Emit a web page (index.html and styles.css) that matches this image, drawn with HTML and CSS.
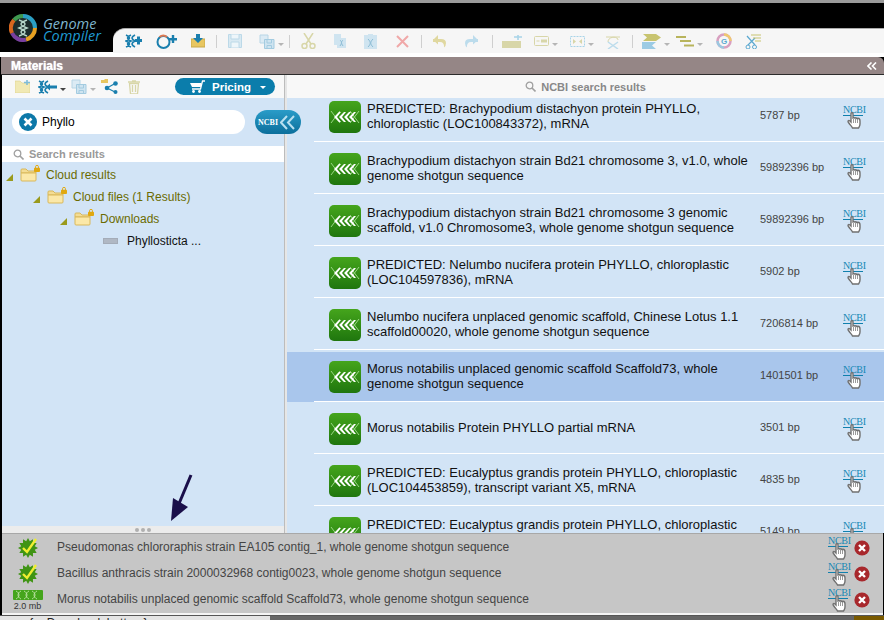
FILE: index.html
```html
<!DOCTYPE html>
<html lang="en">
<head>
	<meta charset="UTF-8">
	<title>Genome Compiler</title>
	<link rel="stylesheet" href="styles.css">
</head>
<body>
	<!-- shared icons -->
	<svg class="defs" width="0" height="0">
		<symbol id="seq" viewBox="0 0 32 32">
			<rect width="32" height="32" rx="5" fill="url(#seqGrad)"/>
			<path d="M2 10 L11 22 M11 10 L2 22 M21 10 L30 22 M30 10 L21 22" stroke="#9ad685" stroke-width="1" fill="none"/>
			<path d="M10 11 L5 16 L10 21 L12 21 L8 16 L12 11Z M15 11 L10 16 L15 21 L17 21 L13 16 L17 11Z M20 11 L15 16 L20 21 L22 21 L18 16 L22 11Z M25 11 L20 16 L25 21 L27 21 L23 16 L27 11Z" fill="#fff"/>
		</symbol>
		<linearGradient id="seqGrad" x1="0" y1="0" x2="0" y2="1">
			<stop offset="0" stop-color="#45a51c"/>
			<stop offset="1" stop-color="#1f760e"/>
		</linearGradient>
		<symbol id="hand" viewBox="0 0 14 17">
			<path d="M4 1.5 C4 .5 6 .5 6 1.5 L6 6 L7 5.6 L7.6 6 L9 5.8 L9.6 6.4 L11 6.2 C12.5 6.4 13 7.5 13 9 L13 12 C13 14 12 15 11.5 16 L5.5 16 C5 14.5 3.5 13.5 1.5 10.5 C.5 9 1.5 8 3 9 L4 10Z" fill="#fff" stroke="#707070" stroke-width="1.4"/>
			<path d="M6.5 7 V11 M8.5 7 V11 M10.5 7 V11" stroke="#808080" stroke-width=".8"/>
		</symbol>
		<symbol id="burst" viewBox="0 0 20 20">
			<polygon points="20,10 16.76,11.81 18.66,15 14.95,14.95 15,18.66 11.81,16.76 10,20 8.19,16.76 5,18.66 5.05,14.95 1.34,15 3.24,11.81 0,10 3.24,8.19 1.34,5 5.05,5.05 5,1.34 8.19,3.24 10,0 11.81,3.24 15,1.34 14.95,5.05 18.66,5 16.76,8.19" fill="#3f9414"/>
			<path d="M5 10 L9 14 L18 1" fill="none" stroke="#f0ee30" stroke-width="2.4"/>
		</symbol>
		<symbol id="close" viewBox="0 0 16 16">
			<circle cx="8" cy="8" r="7.6" fill="#a8282c"/>
			<path d="M5 5 L11 11 M11 5 L5 11" stroke="#fff" stroke-width="2.4"/>
		</symbol>
		<symbol id="folder" viewBox="0 0 17 14">
			<path d="M1 4 V2 Q1 1 2 1 H6 L8 3 H15 Q16 3 16 4 V5 H1Z" fill="#f3dc94" stroke="#d9b85a"/>
			<path d="M1 5 H16 V12 Q16 13 15 13 H2 Q1 13 1 12Z" fill="#fbe8a8" stroke="#d9b85a"/>
		</symbol>
		<symbol id="lock" viewBox="0 0 7 8">
			<rect x="0" y="3" width="7" height="5" rx="1" fill="#e0a810"/>
			<path d="M1.8 3.5 V2 A1.7 1.7 0 0 1 5.2 2 V3.5" fill="none" stroke="#e0a810" stroke-width="1.1"/>
		</symbol>
		<symbol id="strand" viewBox="0 0 11 14">
			<path d="M1 1 C5.500 3 5.500 5 1 7 C5.500 9 5.500 11 1 13 M6 1 C1.500 3 1.500 5 6 7 C1.500 9 1.500 11 6 13 M10 1 C6 3 6 5 10 7 C6 9 6 11 10 13" fill="none" stroke="currentColor" stroke-width="1.700"/>
		</symbol>
		<symbol id="copydoc" viewBox="0 0 16 15">
			<path d="M1 1 H9 V9 H1Z" fill="#dcebf4" stroke="#b8d6e6"/>
			<path d="M5.5 5.5 H15 V14.5 H5.5Z" fill="#cfe4f0" stroke="#a3cbe0"/>
			<path d="M8 5.5 V9 H12.5 V5.5 M8 14.5 V11.5 H12.5 V14.5" fill="none" stroke="#a3cbe0"/>
		</symbol>
	</svg>

	<div class="app">
		<div class="topline"></div>

		<div class="header">
			<div class="logo">
				<svg width="28" height="28" viewBox="0 0 28 28">
					<circle cx="14" cy="14" r="14" fill="#1c2c2c"/>
					<path d="M14 2 A12 12 0 0 1 26 14" fill="none" stroke="#2a9fc4" stroke-width="4"/>
					<path d="M26 14 A12 12 0 0 1 17 25.6" fill="none" stroke="#e8a020" stroke-width="4"/>
					<path d="M17 25.6 A12 12 0 0 1 3 19" fill="none" stroke="#7a3fa0" stroke-width="4"/>
					<path d="M3 19 A12 12 0 0 1 5 6" fill="none" stroke="#d8661e" stroke-width="4"/>
					<path d="M5 6 A12 12 0 0 1 14 2" fill="none" stroke="#3f9a50" stroke-width="4"/>
					<path d="M10 6 C18 9 18 11 10 14 C18 17 18 19 10 22 M18 6 C10 9 10 11 18 14 C10 17 10 19 18 22" fill="none" stroke="#b9d8cc" stroke-width="1.400"/>
				</svg>
				<div class="logo-name">
					<div class="logo-top">Genome</div>
					<div class="logo-bottom">Compiler</div>
				</div>
			</div>

			<div class="toolbar">
				<div class="tool-group first">
					<svg class="on" width="17" height="14" viewBox="0 0 17 14"><use href="#strand" width="11" height="14"/><path d="M10 5 H17 V8 H10Z M12 2.500 H15 V10.500 H12Z" fill="#1a7fae"/></svg>
					<svg width="21" height="15" viewBox="0 0 21 15"><circle cx="7.500" cy="8" r="6" fill="none" stroke="#1a7fae" stroke-width="2"/><path d="M3.500 3 A6 6 0 0 1 11 3" fill="none" stroke="#e07850" stroke-width="2"/><path d="M13 4 H21 V6.500 H13Z M15.800 1 H18.200 V9 H15.800Z" fill="#1a7fae"/></svg>
					<svg width="14" height="14" viewBox="0 0 14 14"><path d="M0 5 H14 V13 H0Z" fill="#e8c660" stroke="#c8a848"/><path d="M5 0 H9 V4 H12 L7 9 L2 4 H5Z" fill="#1a7fae"/></svg>
				</div>
				<div class="sep"></div>
				<div class="tool-group second">
					<svg width="14" height="14" viewBox="0 0 14 14"><path d="M.5 .5 H13.500 V13.500 H.5Z" fill="#d8e9f2" stroke="#bcd9e8"/><path d="M3 .5 V5 H11 V.5 M3 13.500 V8 H11 V13.500" fill="#eef6fa" stroke="#bcd9e8"/></svg>
					<span class="has-caret"><svg width="16" height="15"><use href="#copydoc"/></svg><i class="caret"></i></span>
				</div>
				<div class="sep"></div>
				<div class="tool-group edit">
					<svg width="15" height="16" viewBox="0 0 15 16"><path d="M3 0 L10 11 M12 0 L5 11" stroke="#d8d6a8" stroke-width="1.500"/><circle cx="3.500" cy="13" r="2.500" fill="none" stroke="#d8d6a8" stroke-width="1.500"/><circle cx="11.500" cy="13" r="2.500" fill="none" stroke="#d8d6a8" stroke-width="1.500"/></svg>
					<svg width="12" height="14" viewBox="0 0 12 14"><path d="M0 0 H7 L7 4 H12 V14 H3 V11 H0Z" fill="#cfe4f0"/><path d="M6 6 C8 8 8 9 6 12 M9 6 C7 8 7 9 9 12" stroke="#8dbdd6" fill="none"/></svg>
					<svg width="14" height="15" viewBox="0 0 14 15"><path d="M0 1 H4 V0 H9 V1 H13 V15 H0Z" fill="#cfe4f0"/><path d="M4 5 C7 8 7 10 4 13 M9 5 C6 8 6 10 9 13" stroke="#8dbdd6" fill="none"/></svg>
					<svg width="13" height="13" viewBox="0 0 13 13"><path d="M1 1 L12 12 M12 1 L1 12" stroke="#f0a8a8" stroke-width="2"/></svg>
				</div>
				<div class="sep"></div>
				<div class="tool-group history">
					<svg width="15" height="14" viewBox="0 0 15 14"><path d="M1 5 H9 Q14 5 14 9 Q14 12 12 13.500 Q12.500 8 8 8 H1Z" fill="#e0d8a0"/><path d="M6 1 L1 6 L6 10.500Z" fill="#e0d8a0"/></svg>
					<svg width="15" height="14" viewBox="0 0 15 14"><path d="M14 5 H6 Q1 5 1 9 Q1 12 3 13.500 Q2.500 8 7 8 H14Z" fill="#bcdcec"/><path d="M9 1 L14 6 L9 10.500Z" fill="#bcdcec"/></svg>
				</div>
				<div class="sep"></div>
				<div class="tool-group features">
					<svg width="20" height="13" viewBox="0 0 20 13"><rect y="6" width="19" height="7" fill="#d8d6a8"/><path d="M12 2 H20 M16 0 V5" stroke="#a8d4e8" stroke-width="1.600"/></svg>
					<span class="has-caret"><svg width="15" height="10" viewBox="0 0 15 10"><rect x=".5" y=".5" width="14" height="9" rx="1" fill="none" stroke="#d8d6a8"/><rect x="7" y="3.500" width="6" height="3" fill="#d8d6a8"/><rect x="2.500" y="4.500" width="3" height="1" fill="#d8d6a8"/></svg><i class="caret"></i></span>
					<span class="has-caret"><svg width="15" height="11" viewBox="0 0 15 11"><rect x=".5" y=".5" width="14" height="10" fill="none" stroke="#a8d4e8" stroke-dasharray="2 1"/><path d="M3 3 L6 5.500 L3 8Z M12 3 L9 5.500 L12 8Z" fill="#d8d6a8"/></svg><i class="caret"></i></span>
					<svg width="14" height="15" viewBox="0 0 14 15"><path d="M2 8 C2 2 12 2 12 6 M0 3 L14 3" stroke="#d8d6a8" fill="none"/><path d="M2 8 L12 15 M12 8 L2 15" stroke="#bcdcec" stroke-width="1.500"/></svg>
				</div>
				<div class="sep"></div>
				<div class="tool-group last">
					<span class="has-caret"><svg width="19" height="15" viewBox="0 0 19 15"><path d="M1 0 H14 L19 3.500 L14 7 H1 L5 3.500Z" fill="#c8c470"/><path d="M0 8 H14 L10 11.500 L14 15 H0Z" fill="#9ccbe4"/></svg><i class="caret"></i></span>
					<span class="has-caret"><svg width="18" height="11" viewBox="0 0 18 11"><path d="M0 1 H10 M4 5 H15 M8 9.500 H18" stroke="#b8b45c" stroke-width="2"/></svg><i class="caret"></i></span>
					<svg width="16" height="16" viewBox="0 0 16 16"><circle cx="8" cy="8" r="6.500" fill="none" stroke="#d8a0c0" stroke-width="2.500"/><path d="M8 1.500 A6.500 6.500 0 0 1 14.500 8" fill="none" stroke="#f0c870" stroke-width="2.500"/><path d="M1.500 8 A6.500 6.500 0 0 0 8 14.500" fill="none" stroke="#9cc8e0" stroke-width="2.500"/><text x="8" y="11" class="g-mark">G</text></svg>
					<svg width="16" height="15" viewBox="0 0 16 15"><path d="M2 2 L10 11 M10 4 L3 11" stroke="#5aa8d0" stroke-width="1.200"/><circle cx="3" cy="13" r="2" fill="none" stroke="#5aa8d0"/><circle cx="9.500" cy="13" r="2" fill="none" stroke="#5aa8d0"/><path d="M6 1 H16 M8 4 H16 M10 7 H16" stroke="#c8c470"/></svg>
				</div>
			</div>
		</div>

		<div class="titlebar">
			<span class="title">Materials</span>
			<svg width="10" height="8" viewBox="0 0 10 8"><path d="M4.500 .5 L1 4 L4.500 7.500 M9 .5 L5.500 4 L9 7.500" fill="none" stroke="#fff" stroke-width="1.600"/></svg>
		</div>

		<div class="main">
			<!-- left side, cloud files -->
			<div class="left">
				<div class="left-tools">
					<div class="left-icons">
						<svg class="new-folder" width="15" height="13" viewBox="0 0 15 13"><path d="M0 1 H5 L7 3 H15 V13 H0Z" fill="#f1e9b4" stroke="#dcd08c" stroke-width=".6"/><path d="M9 2.500 H15 M12 0 V5" stroke="#7fbcd8" stroke-width="1.600"/></svg>
						<span class="has-caret"><svg class="on" width="19" height="14" viewBox="0 0 19 14"><use href="#strand" width="11" height="14"/><path d="M8 7 L12 3.500 V5.500 H19 V8.500 H12 V10.500Z" fill="#1a7fae"/></svg><i class="caret dark"></i></span>
						<span class="has-caret"><svg width="16" height="15"><use href="#copydoc"/></svg><i class="caret"></i></span>
						<svg width="18" height="15" viewBox="0 0 18 15"><path d="M0 1 H3 L4 0 H7 V4 H0Z" fill="#e8c660"/><path d="M6 9 L14 4.500 M6 9 L14 13" stroke="#1a7fae" stroke-width="1.200"/><circle cx="6" cy="9" r="2.300" fill="#1a7fae"/><circle cx="14.500" cy="4.500" r="2.300" fill="#1a7fae"/><circle cx="14.500" cy="13" r="2" fill="#1a7fae"/></svg>
						<svg class="trash" width="12" height="14" viewBox="0 0 12 14"><path d="M0 2 H12 M4 1 H8" stroke="#d8d6a8" stroke-width="1.600"/><path d="M1.500 3.500 L2.500 14 H9.500 L10.500 3.500Z M4.500 5 V12 M7.500 5 V12" fill="none" stroke="#d8d6a8" stroke-width="1.300"/></svg>
					</div>
					<div class="pricing">
						<svg width="15" height="13" viewBox="0 0 15 13"><path d="M15 1 H12.500 L10.500 9 H2" fill="none" stroke="#fff" stroke-width="1.300"/><path d="M0 3 H11.500 L10.800 7 H2Z" fill="#fff"/><circle cx="3.500" cy="11.500" r="1.400" fill="#fff"/><circle cx="9.500" cy="11.500" r="1.400" fill="#fff"/></svg>
						<span>Pricing</span>
						<i class="caret white"></i>
					</div>
				</div>

				<div class="search-row">
					<div class="search-box">
						<svg width="18" height="18" viewBox="0 0 18 18"><circle cx="9" cy="9" r="9" fill="#0d78a8"/><path d="M5.500 5.500 L12.500 12.500 M12.500 5.500 L5.500 12.500" stroke="#fff" stroke-width="2.600"/></svg>
						<span class="search-text">Phyllo</span>
					</div>
					<div class="ncbi-btn">
						<span>NCBI</span>
						<svg width="15" height="15" viewBox="0 0 15 15"><path d="M7 1 L1 7.500 L7 14 M14 1 L8 7.500 L14 14" fill="none" stroke="#b8e0f0" stroke-width="2"/></svg>
					</div>
				</div>

				<div class="small-search">
					<svg width="11" height="11" viewBox="0 0 11 11"><circle cx="4.500" cy="4.500" r="3.300" fill="none" stroke="#a0a0a0" stroke-width="1.300"/><path d="M7 7 L10.500 10.500" stroke="#a0a0a0" stroke-width="1.600"/></svg>
					<span>Search results</span>
				</div>

				<div class="tree">
					<div class="tree-row"><i class="open"></i><span class="tree-folder"><svg width="17" height="14"><use href="#folder"/></svg><svg class="lock" width="6" height="7"><use href="#lock"/></svg></span><span>Cloud results</span></div>
					<div class="tree-row lvl1"><i class="open"></i><span class="tree-folder"><svg width="17" height="14"><use href="#folder"/></svg><svg class="lock" width="6" height="7"><use href="#lock"/></svg></span><span>Cloud files (1 Results)</span></div>
					<div class="tree-row lvl2"><i class="open"></i><span class="tree-folder"><svg width="17" height="14"><use href="#folder"/></svg><svg class="lock" width="6" height="7"><use href="#lock"/></svg></span><span>Downloads</span></div>
					<div class="tree-row leaf"><b class="file-mark"></b><span>Phyllosticta ...</span></div>
				</div>

				<div class="grip"><i></i><i></i><i></i></div>

				<!-- the arrow someone drew on the screenshot -->
				<svg class="arrow" width="24" height="48" viewBox="0 0 24 48"><path d="M21 1 L8 32" stroke="#1a0f4a" stroke-width="3"/><path d="M1 47 L3 24 L18 33Z" fill="#1a0f4a"/></svg>
			</div>

			<!-- right side, search results -->
			<div class="right">
				<div class="right-head">
					<svg width="11" height="11" viewBox="0 0 11 11"><circle cx="4.500" cy="4.500" r="3.300" fill="none" stroke="#a0a0a0" stroke-width="1.300"/><path d="M7 7 L10.500 10.500" stroke="#a0a0a0" stroke-width="1.600"/></svg>
					<span>NCBI search results</span>
				</div>
				<div class="list">
					<div class="list-inner">
						<div class="row">
							<div class="row-body"><svg class="seq" width="32" height="32"><use href="#seq"/></svg><div class="row-name">PREDICTED: Brachypodium distachyon protein PHYLLO, chloroplastic (LOC100843372), mRNA</div><div class="row-bp">5787 bp</div><div class="ncbi"><a>NCBI</a><svg width="14" height="17"><use href="#hand"/></svg></div></div>
							<div class="row-line"></div>
						</div>
						<div class="row">
							<div class="row-body"><svg class="seq" width="32" height="32"><use href="#seq"/></svg><div class="row-name">Brachypodium distachyon strain Bd21 chromosome 3, v1.0, whole genome shotgun sequence</div><div class="row-bp">59892396 bp</div><div class="ncbi"><a>NCBI</a><svg width="14" height="17"><use href="#hand"/></svg></div></div>
							<div class="row-line"></div>
						</div>
						<div class="row">
							<div class="row-body"><svg class="seq" width="32" height="32"><use href="#seq"/></svg><div class="row-name">Brachypodium distachyon strain Bd21 chromosome 3 genomic scaffold, v1.0 Chromosome3, whole genome shotgun sequence</div><div class="row-bp">59892396 bp</div><div class="ncbi"><a>NCBI</a><svg width="14" height="17"><use href="#hand"/></svg></div></div>
							<div class="row-line"></div>
						</div>
						<div class="row">
							<div class="row-body"><svg class="seq" width="32" height="32"><use href="#seq"/></svg><div class="row-name">PREDICTED: Nelumbo nucifera protein PHYLLO, chloroplastic (LOC104597836), mRNA</div><div class="row-bp">5902 bp</div><div class="ncbi"><a>NCBI</a><svg width="14" height="17"><use href="#hand"/></svg></div></div>
							<div class="row-line"></div>
						</div>
						<div class="row">
							<div class="row-body"><svg class="seq" width="32" height="32"><use href="#seq"/></svg><div class="row-name">Nelumbo nucifera unplaced genomic scaffold, Chinese Lotus 1.1 scaffold00020, whole genome shotgun sequence</div><div class="row-bp">7206814 bp</div><div class="ncbi"><a>NCBI</a><svg width="14" height="17"><use href="#hand"/></svg></div></div>
							<div class="row-line"></div>
						</div>
						<div class="row selected">
							<div class="row-body"><svg class="seq" width="32" height="32"><use href="#seq"/></svg><div class="row-name">Morus notabilis unplaced genomic scaffold Scaffold73, whole genome shotgun sequence</div><div class="row-bp">1401501 bp</div><div class="ncbi"><a>NCBI</a><svg width="14" height="17"><use href="#hand"/></svg></div></div>
							<div class="row-line"></div>
						</div>
						<div class="row">
							<div class="row-body"><svg class="seq" width="32" height="32"><use href="#seq"/></svg><div class="row-name">Morus notabilis Protein PHYLLO partial mRNA</div><div class="row-bp">3501 bp</div><div class="ncbi"><a>NCBI</a><svg width="14" height="17"><use href="#hand"/></svg></div></div>
							<div class="row-line"></div>
						</div>
						<div class="row">
							<div class="row-body"><svg class="seq" width="32" height="32"><use href="#seq"/></svg><div class="row-name">PREDICTED: Eucalyptus grandis protein PHYLLO, chloroplastic (LOC104453859), transcript variant X5, mRNA</div><div class="row-bp">4835 bp</div><div class="ncbi"><a>NCBI</a><svg width="14" height="17"><use href="#hand"/></svg></div></div>
							<div class="row-line"></div>
						</div>
						<div class="row">
							<div class="row-body"><svg class="seq" width="32" height="32"><use href="#seq"/></svg><div class="row-name">PREDICTED: Eucalyptus grandis protein PHYLLO, chloroplastic (LOC104453860), mRNA</div><div class="row-bp">5149 bp</div><div class="ncbi"><a>NCBI</a><svg width="14" height="17"><use href="#hand"/></svg></div></div>
							<div class="row-line"></div>
						</div>
					</div>
				</div>
			</div>
		</div>

		<!-- download tray -->
		<div class="tray">
			<div class="tray-row">
				<div class="tray-icon"><svg width="20" height="20"><use href="#burst"/></svg></div>
				<div class="tray-name">Pseudomonas chlororaphis strain EA105 contig_1, whole genome shotgun sequence</div>
				<div class="ncbi"><a>NCBI</a><svg width="14" height="17"><use href="#hand"/></svg></div>
				<svg class="tray-close" width="16" height="16"><use href="#close"/></svg>
			</div>
			<div class="tray-row">
				<div class="tray-icon"><svg width="20" height="20"><use href="#burst"/></svg></div>
				<div class="tray-name">Bacillus anthracis strain 2000032968 contig0023, whole genome shotgun sequence</div>
				<div class="ncbi"><a>NCBI</a><svg width="14" height="17"><use href="#hand"/></svg></div>
				<svg class="tray-close" width="16" height="16"><use href="#close"/></svg>
			</div>
			<div class="tray-row">
				<div class="tray-icon">
					<svg width="30" height="10" viewBox="0 0 30 10"><rect width="30" height="10" rx="1" fill="#45a51c"/><path d="M3 1 C7 3 7 7 3 9 M8 1 C4 3 4 7 8 9 M11 1 C15 3 15 7 11 9 M16 1 C12 3 12 7 16 9 M19 1 C23 3 23 7 19 9 M24 1 C20 3 20 7 24 9" fill="none" stroke="#c8e8b0" stroke-width=".8"/></svg>
					<div class="size">2.0 mb</div>
				</div>
				<div class="tray-name">Morus notabilis unplaced genomic scaffold Scaffold73, whole genome shotgun sequence</div>
				<div class="ncbi"><a>NCBI</a><svg width="14" height="17"><use href="#hand"/></svg></div>
				<svg class="tray-close" width="16" height="16"><use href="#close"/></svg>
			</div>
		</div>

		<!-- whatever was behind the window -->
		<div class="behind">
			<div class="behind-left">ss.{ngDownload_bottom}</div>
			<div class="behind-mid"></div>
			<div class="behind-right"></div>
		</div>
	</div>
</body>
</html>
```

FILE: styles.css
```css
*{
	margin: 0;
	padding: 0;
	box-sizing: border-box;
}

body{
	background-color: #000;
	font-family: "Liberation Sans", Arial, sans-serif;
	overflow: hidden;
}

.defs{
	display: block;
	height: 0;
}

.app{
	width: 884px;
	height: 620px;
	display: flex;
	flex-direction: column;
	overflow: hidden;
}

.topline{
	height: 3px;
	background-color: #9a9a9a;
}

/* header */
.header{
	height: 54px;
	display: flex;
	background: linear-gradient(#000 49px, #fff 49px);
}

.logo{
	width: 113px;
	display: flex;
	gap: 6px;
	padding: 11px 0 0 9px;
}

.logo-name{
	font-family: "Open Sans", sans-serif;
	font-style: italic;
	font-size: 14.5px;
	line-height: 12px;
	padding-top: 4px;
}

.logo-top{
	color: #7fb4cc;
}

.logo-bottom{
	color: #1f9ad2;
}

.toolbar{
	flex: 1;
	height: 25px;
	margin-top: 25px;
	display: flex;
	align-items: center;
	background-color: #f6f6f6;
	border-top: 1px solid #ababab;
	border-top-left-radius: 12px;
}

.tool-group{
	display: flex;
	align-items: center;
}

.tool-group.first{
	gap: 14px;
	padding: 0 11px 0 12px;
}

.tool-group.second{
	gap: 17px;
	padding: 0 5px 0 11px;
}

.tool-group.edit{
	gap: 18px;
	padding: 0 12px 0 11px;
}

.tool-group.history{
	gap: 17px;
	padding: 0 13px 0 10px;
}

.tool-group.features{
	gap: 12px;
	padding: 0 12px 0 9px;
}

.tool-group.last{
	gap: 13px;
	padding-left: 9px;
}

.tool-group.last .has-caret:first-child{
	margin-right: -7px;
}

.has-caret{
	display: flex;
	align-items: center;
	gap: 3px;
}

.caret{
	display: block;
	width: 0;
	height: 0;
	border-left: 3px solid transparent;
	border-right: 3px solid transparent;
	border-top: 3px solid #b5b5b5;
	margin-top: 6px;
}

.caret.dark{
	border-top-color: #444;
}

.caret.white{
	border-top-color: #fff;
	margin-top: 2px;
}

.sep{
	width: 1px;
	height: 13px;
	background-color: #cfcfcf;
}

.on{
	color: #1a7fae;
}

.g-mark{
	font-size: 8px;
	font-weight: bold;
	fill: #5aa8d0;
	text-anchor: middle;
}

/* materials bar */
.titlebar{
	height: 18px;
	margin-left: 1px;
	padding: 0 7px 0 10px;
	display: flex;
	align-items: center;
	justify-content: space-between;
	background-color: #958686;
	border-bottom: 1px solid #2c2c2c;
	border-top-right-radius: 6px;
}

.title{
	color: #fff;
	font-size: 12px;
	font-weight: bold;
	text-shadow: 0 0 1px #fff;
}

.main{
	height: 458px;
	display: flex;
	margin-left: 2px;
	background-color: #e6e6e6;
}

/* left column */
.left{
	width: 283px;
	display: flex;
	flex-direction: column;
	position: relative;
	background-color: #d2e4f6;
	border-right: 1px solid #bcbcbc;
}

.left-tools{
	height: 23px;
	padding-left: 13px;
	display: flex;
	align-items: center;
	background-color: #f8f8f8;
}

.left-icons{
	width: 160px;
	display: flex;
	align-items: center;
	gap: 5px;
}

.new-folder{
	margin-right: 3px;
}

.trash{
	margin-left: 4px;
}

.pricing{
	width: 100px;
	height: 17px;
	display: flex;
	align-items: center;
	gap: 7px;
	padding-left: 15px;
	border-radius: 9px;
	background-color: #0b7dab;
	color: #fff;
	font-size: 11.5px;
	font-weight: bold;
}

.pricing .caret{
	margin-left: 2px;
}

.search-row{
	height: 48px;
	display: flex;
	align-items: center;
	gap: 10px;
	padding-left: 10px;
}

.search-box{
	width: 233px;
	height: 24px;
	flex-shrink: 0;
	display: flex;
	align-items: center;
	gap: 5px;
	padding-left: 7px;
	background-color: #fff;
	border-radius: 12px;
	font-size: 12px;
}

.search-text{
	margin-top: -1px;
}

/* sticks out over the right column */
.ncbi-btn{
	width: 46px;
	height: 24px;
	flex-shrink: 0;
	position: relative;
	z-index: 2;
	display: flex;
	align-items: center;
	gap: 2px;
	padding-left: 3px;
	border-radius: 12px;
	background: linear-gradient(#2a9cc8, #0c6f9c);
	color: #fff;
	font-family: "Liberation Serif", serif;
	font-size: 8px;
	font-weight: bold;
}

.small-search{
	height: 16px;
	display: flex;
	align-items: center;
	gap: 5px;
	padding-left: 11px;
	background-color: #fff;
	color: #999;
	font-size: 11px;
	font-weight: bold;
}

.tree{
	flex: 1;
	padding-top: 2px;
	font-size: 12px;
	color: #6b6b00;
}

.tree-row{
	height: 22px;
	display: flex;
	align-items: center;
	padding-left: 4px;
}

.tree-row.lvl1{
	padding-left: 31px;
}

.tree-row.lvl2{
	padding-left: 58px;
}

.tree-row.leaf{
	padding-left: 101px;
	color: #111;
}

.open{
	width: 0;
	height: 0;
	margin-top: 4px;
	border-left: 7px solid transparent;
	border-bottom: 7px solid #9a9a1c;
}

.tree-folder{
	display: flex;
	width: 26px;
	margin-left: 7px;
	position: relative;
}

.lock{
	position: absolute;
	left: 14px;
	top: -3px;
}

.file-mark{
	width: 15px;
	height: 6px;
	margin-right: 9px;
	background-color: #b0b8c4;
	border: 1px solid #a4acb8;
}

.grip{
	height: 7px;
	display: flex;
	justify-content: center;
	align-items: center;
	gap: 2px;
	background-color: #ececec;
}

.grip i{
	width: 4px;
	height: 4px;
	border-radius: 50%;
	background-color: #b0b0b0;
}

.arrow{
	position: absolute;
	left: 168px;
	top: 399px;
}

/* right column */
.right{
	flex: 1;
	margin-left: 2px;
	display: flex;
	flex-direction: column;
	min-width: 0;
}

.right-head{
	height: 23px;
	display: flex;
	align-items: center;
	justify-content: center;
	gap: 5px;
	background-color: #f8f8f8;
	color: #888;
	font-size: 11px;
	font-weight: bold;
}

.list{
	flex: 1;
	overflow: hidden;
	background-color: #d2e4f6;
}

/* first row starts under the head, it is scrolled a bit */
.list-inner{
	margin-top: -6px;
}

.row{
	height: 50px;
	margin-bottom: 2px;
}

.row.selected{
	background-color: #a9c6ec;
}

.row-body{
	height: 49px;
	display: flex;
	align-items: center;
	padding-left: 42px;
}

.row-line{
	height: 1px;
	margin-left: 27px;
	background-color: #fff;
}

.seq{
	flex-shrink: 0;
	margin-right: 6px;
}

.row-name{
	width: 393px;
	padding-right: 8px;
	margin-bottom: 2px;
	font-size: 13px;
	line-height: 15px;
	color: #111;
}

.row-bp{
	width: 83px;
	margin-bottom: 3px;
	font-size: 11px;
	color: #444;
}

.ncbi{
	width: 20px;
	display: flex;
	flex-direction: column;
	align-items: center;
}

.ncbi a{
	width: 20px;
	font-family: "Liberation Serif", serif;
	font-size: 10px;
	line-height: 10px;
	text-align: center;
	letter-spacing: -.3px;
	color: #1688b5;
	border-bottom: 1px solid #1080ad;
}

.ncbi svg{
	margin: -4px 0 0 1px;
}

/* tray */
.tray{
	height: 82px;
	margin-left: 2px;
	margin-right: 1px;
	padding-top: 1px;
	background-color: #c6c6c6;
	border-top: 1px solid #a8a8a8;
	border-bottom: 2px solid #f4f4f4;
}

.tray-row{
	height: 26px;
	display: flex;
	align-items: center;
}

.tray-icon{
	width: 51px;
	display: flex;
	flex-direction: column;
	align-items: center;
}

.size{
	font-size: 9px;
	line-height: 10px;
	color: #333;
	margin-top: 1px;
}

.tray-name{
	width: 775px;
	padding-left: 4px;
	margin-top: -2px;
	font-size: 12px;
	color: #444;
}

.tray-close{
	margin-left: 6px;
}

.behind{
	height: 5px;
	display: flex;
	border-top: 1px solid #555;
	overflow: hidden;
}

.behind-left{
	width: 270px;
	padding-left: 14px;
	background-color: #e4e4e4;
	color: #222;
	font-size: 12px;
	line-height: 14px;
}

.behind-mid{
	flex: 1;
	background-color: #666;
}

.behind-right{
	width: 30px;
	background-color: #7a5a00;
}
```
